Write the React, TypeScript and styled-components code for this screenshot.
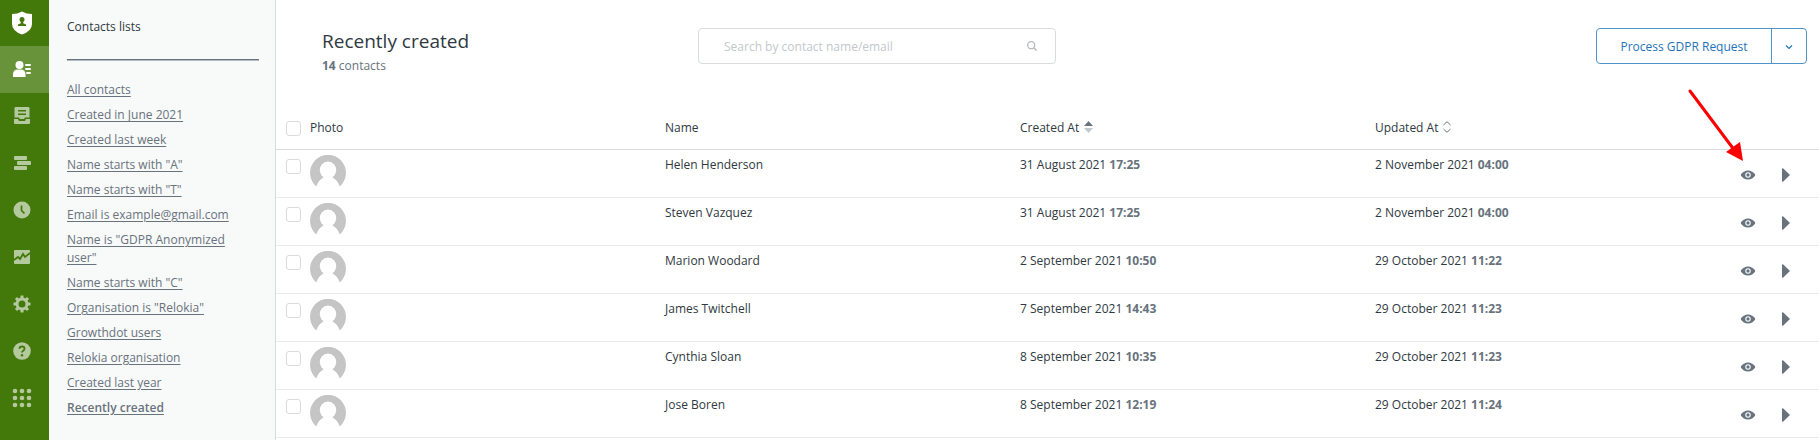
import React from "react";
import styled, { createGlobalStyle } from "styled-components";

const GlobalStyle = createGlobalStyle`
  * { box-sizing: border-box; }
  body {
    margin: 0;
    background: #fff;
    color: #2f3941;
    font: 12px/18px "Open Sans", "Noto Sans", sans-serif;
  }
  button, input { font: inherit; color: inherit; }
`;

const Page = styled.div`
  display: flex;
  min-height: 100vh;
`;

const Rail = styled.nav`
  flex: none;
  width: 49px;
  background: #43780a;
`;

const Brand = styled.div`
  display: grid;
  place-items: center;
  height: 46px;
  padding-right: 5px;
`;

const RailButton = styled.button<{ $active?: boolean }>`
  display: grid;
  place-items: center;
  width: 100%;
  height: 47px;
  padding: 0 5px 1px 0;
  border: 0;
  cursor: pointer;
  background: ${(p) => (p.$active ? "#69933b" : "transparent")};
  color: ${(p) => (p.$active ? "#fff" : "#b4c99d")};
`;

const Sidebar = styled.aside`
  flex: none;
  width: 227px;
  padding: 18px 16px 16px 18px;
  background: #f8f9f9;
  border-right: 1px solid #d8dcde;
`;

const SidebarTitle = styled.h2`
  margin: 0;
  font-size: 12px;
  line-height: 18px;
  font-weight: 500;
`;

const Divider = styled.hr`
  height: 2px;
  margin: 23px 0 20px;
  border: 0;
  border-top: 1px solid #68737d;
  border-bottom: 1px solid #b5babe;
`;

const Lists = styled.ul`
  display: flex;
  flex-direction: column;
  gap: 7px;
  margin: 0;
  padding: 0 16px 0 0;
  list-style: none;
`;

const ListLink = styled.a<{ $current?: boolean }>`
  color: #68737d;
  text-decoration: underline;
  text-underline-offset: 2px;
  font-weight: ${(p) => (p.$current ? 600 : 400)};
`;

const Main = styled.main`
  position: relative;
  flex: 1;
  min-width: 0;
`;

const Header = styled.header`
  display: grid;
  grid-template-columns: 376px minmax(200px, 358px) 1fr;
  align-items: start;
  padding: 28px 12px 27px 46px;
`;

const Title = styled.h1`
  margin: 0;
  font-size: 19px;
  line-height: 26px;
  font-weight: 500;
`;

const Count = styled.p`
  margin: 3px 0 0;
  color: #68737d;
`;

const Strong = styled.strong`
  font-weight: 700;
  color: #68737d;
`;

const Search = styled.label`
  display: flex;
  align-items: center;
  height: 36px;
  padding: 0 18px 0 25px;
  border: 1px solid #d8dcde;
  border-radius: 4px;
  color: #b5babe;
`;

const SearchInput = styled.input`
  flex: 1;
  min-width: 0;
  padding: 2px 0 0;
  border: 0;
  outline: 0;
  background: transparent;
  color: #2f3941;
  &::placeholder { color: #c2c8cc; opacity: 1; }
`;

const SplitButton = styled.div`
  display: flex;
  justify-self: end;
  height: 36px;
  border: 1px solid #5293c7;
  border-radius: 4px;
  color: #1f73b7;
`;

const SplitPart = styled.button<{ $menu?: boolean }>`
  display: grid;
  place-items: center;
  width: ${(p) => (p.$menu ? "35px" : "174px")};
  padding: 2px 0 0;
  border: 0;
  border-left: ${(p) => (p.$menu ? "1px solid #5293c7" : "0")};
  background: transparent;
  cursor: pointer;
`;

const Table = styled.table`
  width: 100%;
  table-layout: fixed;
  border-collapse: separate;
  border-spacing: 0;
`;

const HeadCell = styled.th<{ $width?: string }>`
  width: ${(p) => p.$width ?? "auto"};
  height: 48px;
  padding: 17px 0 12px;
  border-bottom: 1px solid #d8dcde;
  text-align: left;
  vertical-align: top;
  font-weight: 500;
`;

const Cell = styled.td`
  height: 48px;
  padding: 5px 0 6px;
  border-bottom: 1px solid #e9ebed;
  vertical-align: top;
`;

const TextCell = styled(Cell)`
  padding-top: 6px;
`;

const CheckLabel = styled.label`
  display: flex;
  padding: 4px 0 0 10px;
`;

const HeadCheckLabel = styled(CheckLabel)`
  padding-top: 2px;
`;

const Checkbox = styled.input`
  appearance: none;
  width: 15px;
  height: 15px;
  margin: 0;
  border: 1px solid #d8dcde;
  border-radius: 3px;
  background: #fff;
  &:checked { background: #1f73b7; border-color: #1f73b7; }
`;

const SortButton = styled.button`
  display: flex;
  align-items: flex-start;
  gap: 5px;
  padding: 0;
  border: 0;
  background: transparent;
  cursor: pointer;
`;

const SortIcon = styled.svg`
  margin-top: 2px;
`;

const Avatar = styled.svg`
  display: block;
`;

const Actions = styled.div`
  display: flex;
  align-items: center;
  gap: 18px;
  padding: 10px 0 0 8px;
`;

const IconButton = styled.button`
  display: grid;
  place-items: center;
  width: 20px;
  height: 20px;
  padding: 0;
  border: 0;
  background: transparent;
  color: #68737d;
  cursor: pointer;
`;

const Pointer = styled.svg`
  position: absolute;
  top: 86px;
  right: 72px;
  pointer-events: none;
`;

const railItems = [
  {
    label: "Contacts",
    icon: (
      <svg width="20" height="18" viewBox="0 0 20 18" fill="currentColor">
        <circle cx="7.500" cy="5" r="4" />
        <path d="M1 17v-2.500Q1 9.500 6 9.500h2.500q5 0 5 5V17z" />
        <rect x="13" y="4" width="6" height="2" rx="1" />
        <rect x="13" y="8" width="6" height="2" rx="1" />
        <rect x="14" y="12" width="5" height="2" rx="1" />
      </svg>
    ),
  },
  {
    label: "Templates",
    icon: (
      <svg width="18" height="18" viewBox="0 0 18 18" fill="currentColor">
        <path fillRule="evenodd" d="M2.500 0h13a1 1 0 0 1 1 1v9.500h-4.500l-1 1.500h-4l-1-1.500h-4.500V1a1 1 0 0 1 1-1zM5 3v1.500h8V3zM5 6.500V8h8V6.500z" />
        <path d="M1 12h4l1 2h6l1-2h4v4a1 1 0 0 1-1 1H2a1 1 0 0 1-1-1z" />
      </svg>
    ),
  },
  {
    label: "Processes",
    icon: (
      <svg width="18" height="16" viewBox="0 0 18 16" fill="currentColor">
        <rect x="1" y="1" width="13" height="4" rx="1" />
        <rect x="4" y="6" width="14" height="4" rx="1" />
        <rect x="1" y="11" width="13" height="4" rx="1" />
      </svg>
    ),
  },
  {
    label: "Schedules",
    icon: (
      <svg width="18" height="18" viewBox="0 0 18 18">
        <circle cx="9" cy="9" r="8.500" fill="currentColor" />
        <path d="M8.500 4.500v5l3 3" fill="none" stroke="#43780a" strokeWidth="1.700" />
      </svg>
    ),
  },
  {
    label: "Reports",
    icon: (
      <svg width="18" height="16" viewBox="0 0 18 16">
        <rect x="1" y="1" width="16" height="14" rx="1" fill="currentColor" />
        <path d="M1 11l4-3 2 2 3-5 2 3 5-4" fill="none" stroke="#43780a" strokeWidth="1.800" />
      </svg>
    ),
  },
  {
    label: "Settings",
    icon: (
      <svg width="18" height="18" viewBox="0 0 18 18">
        <circle cx="9" cy="9" r="5" fill="none" stroke="currentColor" strokeWidth="3" />
        <g stroke="currentColor" strokeWidth="3">
          {[0, 45, 90, 135].map((a) => (
            <path key={a} d="M9 .5v3M9 14.500v3" transform={`rotate(${a} 9 9)`} />
          ))}
        </g>
      </svg>
    ),
  },
  {
    label: "Help",
    icon: (
      <svg width="18" height="18" viewBox="0 0 18 18">
        <circle cx="9" cy="9" r="8.800" fill="currentColor" />
        <path d="M6.500 6.800q0-2.300 2.500-2.300t2.500 2.200q0 1.200-1.300 2-1.200.8-1.200 1.800" fill="none" stroke="#43780a" strokeWidth="1.800" />
        <circle cx="9" cy="13.200" r="1.200" fill="#43780a" />
      </svg>
    ),
  },
  {
    label: "Apps",
    icon: (
      <svg width="20" height="20" viewBox="0 0 20 20" fill="currentColor">
        {[3, 10, 17].flatMap((y) => [3, 10, 17].map((x) => <circle key={`${x}-${y}`} cx={x} cy={y} r="2.300" />))}
      </svg>
    ),
  },
];

const lists = [
  "All contacts",
  "Created in June 2021",
  "Created last week",
  'Name starts with "A"',
  'Name starts with "T"',
  "Email is example@gmail.com",
  'Name is "GDPR Anonymized user"',
  'Name starts with "C"',
  'Organisation is "Relokia"',
  "Growthdot users",
  "Relokia organisation",
  "Created last year",
  "Recently created",
];

const contacts = [
  { name: "Helen Henderson", created: ["31 August 2021", "17:25"], updated: ["2 November 2021", "04:00"] },
  { name: "Steven Vazquez", created: ["31 August 2021", "17:25"], updated: ["2 November 2021", "04:00"] },
  { name: "Marion Woodard", created: ["2 September 2021", "10:50"], updated: ["29 October 2021", "11:22"] },
  { name: "James Twitchell", created: ["7 September 2021", "14:43"], updated: ["29 October 2021", "11:23"] },
  { name: "Cynthia Sloan", created: ["8 September 2021", "10:35"], updated: ["29 October 2021", "11:23"] },
  { name: "Jose Boren", created: ["8 September 2021", "12:19"], updated: ["29 October 2021", "11:24"] },
];

export default function App() {
  return (
    <Page>
      <GlobalStyle />
      <Rail aria-label="Main">
        <Brand>
          <svg width="22" height="24" viewBox="0 0 22 24">
            <path d="M11 .5q4.500 2.500 10 2.500v10q0 7-10 10.500Q1 20 1 13V3Q6.500 3 11 .5z" fill="#fff" />
            <circle cx="11" cy="8.500" r="2.500" fill="#43780a" />
            <path d="M9.800 10h2.400v2.200l2.800 1.300V15H7v-1.500l2.800-1.300z" fill="#43780a" />
          </svg>
        </Brand>
        {railItems.map((item, i) => (
          <RailButton key={item.label} $active={i === 0} aria-label={item.label}>
            {item.icon}
          </RailButton>
        ))}
      </Rail>

      <Sidebar>
        <SidebarTitle>Contacts lists</SidebarTitle>
        <Divider />
        <Lists>
          {lists.map((name) => (
            <li key={name}>
              <ListLink href="#" $current={name === "Recently created"}>{name}</ListLink>
            </li>
          ))}
        </Lists>
      </Sidebar>

      <Main>
        <Header>
          <div>
            <Title>Recently created</Title>
            <Count><Strong>14</Strong> contacts</Count>
          </div>
          <Search>
            <SearchInput type="text" aria-label="Search contacts" placeholder="Search by contact name/email" />
            <svg width="10" height="10" viewBox="0 0 10 10" fill="none" stroke="currentColor" strokeWidth="1.300">
              <circle cx="4.200" cy="4.200" r="3.500" />
              <path d="M6.800 6.800L9.600 9.600" />
            </svg>
          </Search>
          <SplitButton>
            <SplitPart>Process GDPR Request</SplitPart>
            <SplitPart $menu aria-label="More requests">
              <svg width="8" height="6" viewBox="0 0 8 6" fill="none" stroke="currentColor" strokeWidth="1.200">
                <path d="M1 1.500l3 3 3-3" />
              </svg>
            </SplitPart>
          </SplitButton>
        </Header>

        <Table>
          <thead>
            <tr>
              <HeadCell $width="34px">
                <HeadCheckLabel><Checkbox type="checkbox" aria-label="Select all contacts" /></HeadCheckLabel>
              </HeadCell>
              <HeadCell>Photo</HeadCell>
              <HeadCell>Name</HeadCell>
              <HeadCell>
                <SortButton>
                  Created At
                  <SortIcon width="9" height="12" viewBox="0 0 9 12">
                    <path d="M0 5L4.500 0 9 5z" fill="#68737d" />
                    <path d="M0 7h9L4.500 12z" fill="#c2c8cc" />
                  </SortIcon>
                </SortButton>
              </HeadCell>
              <HeadCell>
                <SortButton>
                  Updated At
                  <SortIcon width="8" height="12" viewBox="0 0 8 12" fill="none" stroke="#68737d">
                    <path d="M.5 4L4 .7 7.500 4M.5 8L4 11.300 7.500 8" />
                  </SortIcon>
                </SortButton>
              </HeadCell>
              <HeadCell $width="89px" aria-label="Actions" />
            </tr>
          </thead>
          <tbody>
            {contacts.map((c) => (
              <tr key={c.name}>
                <Cell>
                  <CheckLabel><Checkbox type="checkbox" aria-label={`Select ${c.name}`} /></CheckLabel>
                </Cell>
                <Cell>
                  <Avatar width="36" height="36" viewBox="0 0 36 36" aria-hidden="true">
                    <path d="M6.300 31.500A18 18 0 1 1 29.700 31.500Q27.500 25 22.500 22.200A8.200 8.500 0 1 0 13.500 22.200Q8.500 25 6.300 31.500z" fill="#c5c5c5" />
                  </Avatar>
                </Cell>
                <TextCell>{c.name}</TextCell>
                <TextCell>{c.created[0]} <Strong>{c.created[1]}</Strong></TextCell>
                <TextCell>{c.updated[0]} <Strong>{c.updated[1]}</Strong></TextCell>
                <Cell>
                  <Actions>
                    <IconButton aria-label={`View ${c.name}`}>
                      <svg width="16" height="10" viewBox="0 0 16 10">
                        <path d="M.5 5Q3.500.5 8 .5t7.500 4.500Q12.500 9.500 8 9.500T.5 5z" fill="currentColor" />
                        <circle cx="8" cy="5" r="2.200" fill="none" stroke="#fff" strokeWidth="1.100" />
                      </svg>
                    </IconButton>
                    <IconButton aria-label={`Process ${c.name}`}>
                      <svg width="8" height="14" viewBox="0 0 8 14" fill="currentColor">
                        <path d="M0 1Q0 0 1 .3L8 7 1 13.700Q0 14 0 13z" />
                      </svg>
                    </IconButton>
                  </Actions>
                </Cell>
              </tr>
            ))}
          </tbody>
        </Table>

        <Pointer width="62" height="78" viewBox="0 0 62 78" aria-hidden="true">
          <path d="M5 5l45 60" stroke="#fe0000" strokeWidth="3" strokeLinecap="round" />
          <path d="M58 75l-17-9 14-10z" fill="#fe0000" />
        </Pointer>
      </Main>
    </Page>
  );
}
